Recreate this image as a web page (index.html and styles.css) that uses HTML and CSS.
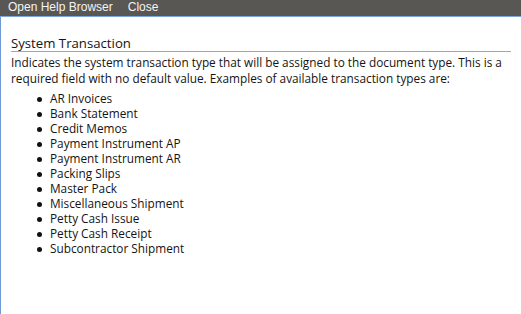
FILE: index.html
```
<!doctype html>
<html lang="en">
<head>
	<meta charset="UTF-8">
	<title>Help</title>
	<link rel="stylesheet" href="styles.css">
</head>
<body>
	<div class="toolbar">
		<span class="tool">Open Help Browser</span>
		<span class="tool">Close</span>
	</div>
	<div class="content">
		<h1 class="title">System Transaction</h1>
		<p class="desc">Indicates the system transaction type that will be assigned to the document type. This is a required field with no default value. Examples of available transaction types are:</p>
		<ul class="types">
			<li>AR Invoices</li>
			<li>Bank Statement</li>
			<li>Credit Memos</li>
			<li>Payment Instrument AP</li>
			<li>Payment Instrument AR</li>
			<li>Packing Slips</li>
			<li>Master Pack</li>
			<li>Miscellaneous Shipment</li>
			<li>Petty Cash Issue</li>
			<li>Petty Cash Receipt</li>
			<li>Subcontractor Shipment</li>
		</ul>
	</div>
</body>
</html>
```
FILE: styles.css
```
*{
	padding: 0;
	margin: 0;
}
html, body{
	height: 100%;
	background: #fff;
}
body{
	display: flex;
	flex-direction: column;
	font-family: "Open Sans", "Noto Sans", sans-serif;
	color: #141414;
}
/*----------------------------toolbar----------------------------------------------*/
div.toolbar{
	height: 16px;
	background-color: #595753;
	border-bottom: 1px solid #7ea6dc;
	display: flex;
	gap: 15px;
	padding-left: 8px;
	font-family: "Liberation Sans", Arial, sans-serif;
	font-size: 12px;
	line-height: 15px;
	color: #f4f4f4;
}
/*----------------------------content----------------------------------------------*/
div.content{
	flex: 1;
	border-left: 1px solid #6f98d4;
	padding: 19px 10px 0 10px;
}
h1.title{
	font-weight: normal;
	font-size: 13.2px;
	line-height: 15px;
	border-bottom: 1px solid #8fa8d8;
	margin-bottom: 2px;
}
p.desc{
	font-size: 11.8px;
	line-height: 16px;
}
ul.types{
	list-style: none;
	margin-top: 5px;
	padding-left: 39px;
	font-size: 11.8px;
	line-height: 15px;
}
ul.types li{
	display: flex;
	align-items: center;
}
ul.types li::before{
	content: "";
	width: 5px;
	height: 5px;
	border-radius: 50%;
	background-color: #111;
	margin: 1px 8px 0 -13px;
	flex-shrink: 0;
}
```
